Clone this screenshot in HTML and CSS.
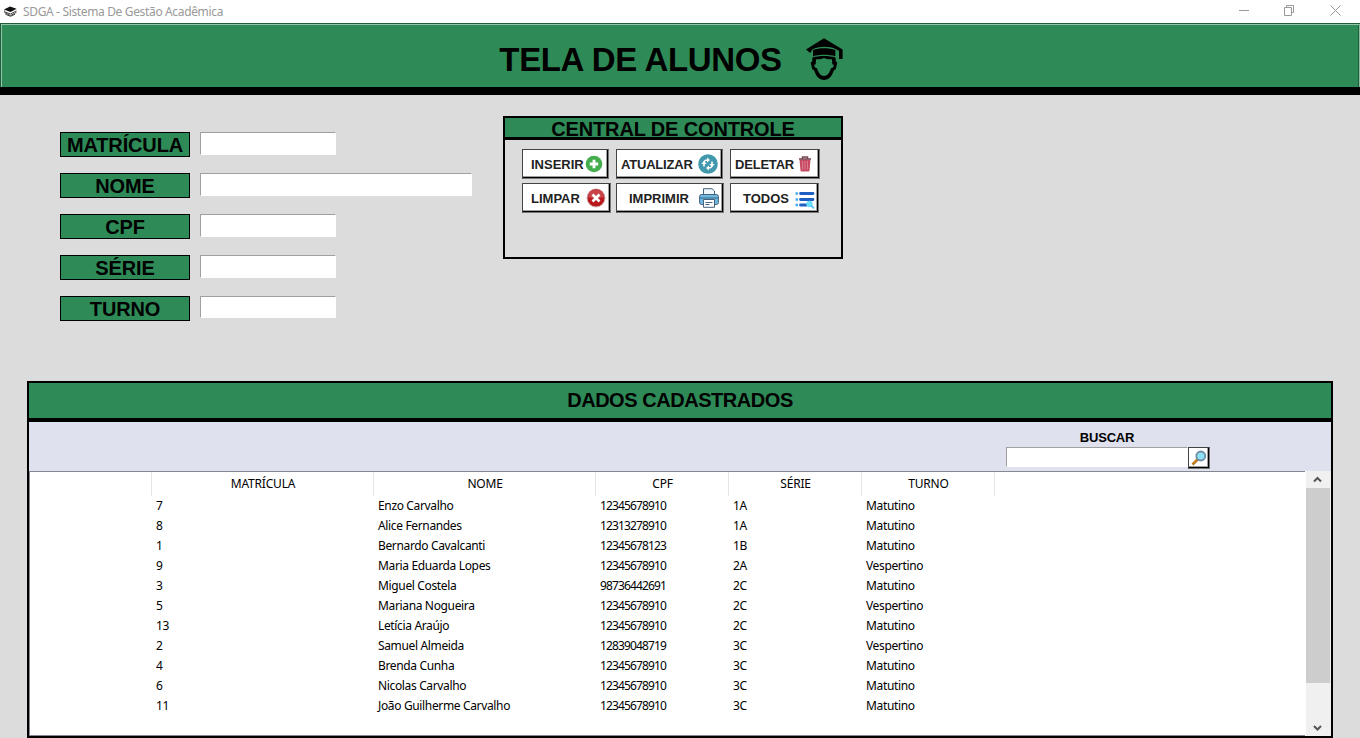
FILE: index.html
```
<!DOCTYPE html>
<html lang="pt-BR">
<head>
<meta charset="utf-8">
<title>SDGA - Sistema De Gestão Acadêmica</title>
<link rel="stylesheet" href="styles.css">
</head>
<body>
<div class="titlebar">
  <svg class="app-icon" width="13" height="11" viewBox="0 0 13 11"><path d="M0 3.400 6 .4l6.600 2.300-6 3.300z" fill="#111"/><path d="M.5 4.500v1.300l6 2.200 6-3.200M.5 6.600l6 3 6-3.400M1.500 8.300l5 2 4.500-2" fill="none" stroke="#444" stroke-width="1"/></svg>
  <span class="app-name">SDGA - Sistema De Gestão Acadêmica</span>
  <svg class="win-controls" width="102" height="11" viewBox="0 0 102 11" fill="none" stroke="#999"><path d="M0 5.500h10M45.500 2.500h7v8h-7zM47.500 2.500v-2h7v7h-2M91.500.5l10 10M101.500.5l-10 10"/></svg>
</div>
<header class="banner">
  <h1>TELA DE ALUNOS</h1>
  <svg width="38" height="43" viewBox="0 0 38 43"><path d="M18 1.200 0 12.500l4.200 3.500 2.300-3.500c6-3.500 17-3.500 23.500-.3l3 1.500V22h3.600v-9.400z"/><path d="M7 13c6-2.500 16-2.500 22.300 0v6.200c-6-2-16-2-22.300 0z"/><path fill-rule="evenodd" d="M6.500 20.500c6-2 17-2 23 0l.3 4 1.500 1-1.500 6.500-2 1.500c-2 6-5 9.500-9.800 9.500S10.200 39.500 8.200 33.500l-2-1.500-1.500-6.500 1.500-1zM10 22.300l-.3 5-1.700.7 1 2.500 2 .8c1.500 4.900 3.700 7.700 7 7.700s5.500-2.800 7-7.700l2-.8 1-2.500-1.700-.7-.3-5c-3 .2-6-.3-8-1.300-2 1-5 1.500-8 1.300z"/></svg>
</header>
<main>
  <section class="top">
    <form class="student-form">
      <label>MATRÍCULA</label><input type="text">
      <label>NOME</label><input class="wide" type="text">
      <label>CPF</label><input type="text">
      <label>SÉRIE</label><input type="text">
      <label>TURNO</label><input class="last" type="text">
    </form>
    <div class="control">
      <h2>CENTRAL DE CONTROLE</h2>
      <div class="row">
        <button class="btn inserir"><span>INSERIR</span><svg width="18" height="18" viewBox="0 0 18 18"><circle cx="9" cy="9" r="8.300" fill="#45ad4e"/><path d="M9 4.800v8.400M4.800 9h8.400" stroke="#fff" stroke-width="2.800"/></svg></button>
        <button class="btn atualizar"><span>ATUALIZAR</span><svg width="20" height="20" viewBox="0 0 20 20"><circle cx="10" cy="10" r="9.800" fill="#4298ac"/><g fill="none" stroke="#fff" stroke-width="1.600"><path d="M6 12.500V9C6 7 7 6 9.500 6M14 7.500V11c0 2-1 3-3.500 3"/></g><path d="m3.300 10 2.700-3L8.700 10zM11.300 10l2.700 3 2.700-3zM9 3.500l3 2.500-3 2.500zM11 11.500 8 14l3 2.500z" fill="#fff"/></svg></button>
        <button class="btn deletar"><span>DELETAR</span><svg width="14" height="16" viewBox="0 0 14 16"><path d="M1.500 3.500h11l-1 11.200q0 .8-1 .8h-7q-1 0-1-.8z" fill="#c64b62"/><path d="M4.500 5v8.500M7 5v8.500M9.500 5v8.500" stroke="#e08a9a" stroke-width=".8"/><path d="M1 3h12M4.500 2.500V1h5v1.500" stroke="#74484f" stroke-width="1.500" fill="none"/></svg></button>
      </div>
      <div class="row">
        <button class="btn limpar"><span>LIMPAR</span><svg width="20" height="20" viewBox="0 0 20 20"><circle cx="10" cy="10" r="9" fill="#b9191d" stroke="#cfb0b0"/><path d="M2 9a8 8 0 0 1 16 0q-8 3-16 0z" fill="#c94447"/><path d="m6.500 6.500 7 7m0-7-7 7" stroke="#fff" stroke-width="2.700"/></svg></button>
        <button class="btn imprimir"><span>IMPRIMIR</span><svg width="20" height="20" viewBox="0 0 20 20" stroke="#45617c"><path d="M4.500 7V.7h8.500l2.500 2.300V7" fill="#eef7fb"/><rect x=".6" y="6.500" width="18.800" height="10" rx="2" fill="#6fb8df"/><path d="M1 10h18" stroke="#3b6588"/><path d="M4.500 11.500h11v7.800h-11z" fill="#fff"/><path d="M6.500 14.500h7M6.500 16.500h4" fill="none"/></svg></button>
        <button class="btn todos"><span>TODOS</span><svg width="20" height="18" viewBox="0 0 20 18"><path d="M5.500 2.500h12.500M5.500 8.500h12.500M5.500 14h6" stroke="#1f5fc4" stroke-width="2.800" stroke-linecap="round"/><path d="M.5 2.500h2.500M.5 8.500h2.500M.5 14h2.500" stroke="#46aef0" stroke-width="2.600"/><circle cx="14.500" cy="13" r="3.200" fill="#6cdcfb"/><path d="m16 14.500 3 3" stroke="#58c8f2" stroke-width="1.800"/></svg></button>
      </div>
    </div>
  </section>
  <section class="records">
    <h2>DADOS CADASTRADOS</h2>
    <div class="toolbar">
      <div class="search">
        <span class="search-label">BUSCAR</span>
        <div class="search-row"><input type="text"><button class="btn find"><svg width="16" height="16" viewBox="0 0 16 16"><path d="m1.500 14.500 5-5" stroke="#aa6a18" stroke-width="2.600"/><path d="m2 13.500 4-4" stroke="#f0aa28"/><circle cx="9.800" cy="6" r="4.500" fill="#8be1f7" stroke="#6f8ca0" stroke-width="1.800"/></svg></button></div>
      </div>
    </div>
    <div class="grid-wrap">
      <div class="grid">
      <table>
        <colgroup><col class="c0"><col class="c1"><col class="c1"><col class="c2"><col class="c2"><col class="c2"></colgroup>
        <thead><tr><th></th><th>MATRÍCULA</th><th>NOME</th><th>CPF</th><th>SÉRIE</th><th>TURNO</th></tr></thead>
        <tbody>
          <tr><td></td><td>7</td><td>Enzo Carvalho</td><td>12345678910</td><td>1A</td><td>Matutino</td></tr>
          <tr><td></td><td>8</td><td>Alice Fernandes</td><td>12313278910</td><td>1A</td><td>Matutino</td></tr>
          <tr><td></td><td>1</td><td>Bernardo Cavalcanti</td><td>12345678123</td><td>1B</td><td>Matutino</td></tr>
          <tr><td></td><td>9</td><td>Maria Eduarda Lopes</td><td>12345678910</td><td>2A</td><td>Vespertino</td></tr>
          <tr><td></td><td>3</td><td>Miguel Costela</td><td>98736442691</td><td>2C</td><td>Matutino</td></tr>
          <tr><td></td><td>5</td><td>Mariana Nogueira</td><td>12345678910</td><td>2C</td><td>Vespertino</td></tr>
          <tr><td></td><td>13</td><td>Letícia Araújo</td><td>12345678910</td><td>2C</td><td>Matutino</td></tr>
          <tr><td></td><td>2</td><td>Samuel Almeida</td><td>12839048719</td><td>3C</td><td>Vespertino</td></tr>
          <tr><td></td><td>4</td><td>Brenda Cunha</td><td>12345678910</td><td>3C</td><td>Matutino</td></tr>
          <tr><td></td><td>6</td><td>Nicolas Carvalho</td><td>12345678910</td><td>3C</td><td>Matutino</td></tr>
          <tr><td></td><td>11</td><td>João Guilherme Carvalho</td><td>12345678910</td><td>3C</td><td>Matutino</td></tr>
        </tbody>
      </table>
      </div>
      <div class="scrollbar">
        <svg width="9" height="17" viewBox="0 0 9 17"><path d="m1 10.500 3.500-3.500L8 10.500" fill="none" stroke="#555" stroke-width="2"/></svg>
        <div class="thumb"></div>
        <svg width="9" height="17" viewBox="0 0 9 17"><path d="M1 7l3.500 3.500L8 7" fill="none" stroke="#555" stroke-width="2"/></svg>
      </div>
    </div>
  </section>
</main>
</body>
</html>
```
FILE: styles.css
```
* { box-sizing: border-box; }
body { margin: 0; width: 1360px; height: 738px; overflow: hidden; background: #dcdcdc; color: #000; font-family: "Liberation Sans", Arial, sans-serif; }
h1, h2 { margin: 0; font-weight: bold; }
svg { display: block; flex: none; }
input { border: solid #fff; border-width: 1px; border-top-color: #a0a0a0; border-left-color: #a0a0a0; background: #fff; padding: 0 2px; border-radius: 0; outline: none; }

.titlebar { display: flex; align-items: center; height: 23px; background: #fff; padding-left: 4px; }
.app-icon { margin-right: 6px; }
.app-name { font: 12px/23px "Noto Sans", sans-serif; letter-spacing: -.35px; color: #999; }
.win-controls { margin: 0 19px 2px auto; }

.banner { display: flex; justify-content: center; height: 72px; background: #2e8b57; border-bottom: 8px solid #000; box-shadow: inset 0 1px #1e5c3a, inset 1px 0 #1e5c3a, inset -1px 0 #8fbfa3, inset 0 2px #93c3a8, inset 2px 0 #93c3a8, inset -2px 0 #1e5c3a; padding: 14px 17px 0 0; gap: 24px; }
.banner h1 { font-size: 33px; line-height: 45px; letter-spacing: -.35px; white-space: nowrap; }

.top { display: flex; height: 286px; padding: 21px 0 0 60px; }
.student-form { display: grid; grid-template-columns: 130px 272px; column-gap: 10px; grid-auto-rows: 25px; row-gap: 16px; margin-top: 16px; width: 443px; }
.student-form label { background: #2e8b57; border: 1px solid #000; font-weight: bold; font-size: 20px; line-height: 24px; letter-spacing: -.15px; text-align: center; }
.student-form input { width: 136px; height: 23px; }
.student-form input.wide { width: 272px; }
.student-form input.last { height: 22px; }

.control { width: 340px; height: 143px; border: 2px solid #000; }
.control h2 { height: 22px; background: #2e8b57; border-bottom: 3px solid #000; font-size: 20px; line-height: 22px; letter-spacing: -.15px; text-align: center; }
.row { display: flex; margin: 9px 0 -5px 17px; height: 30px; }
.btn { display: flex; align-items: center; height: 30px; padding: 0; border: 1px solid #444; border-right-color: #777; border-bottom-color: #777; border-radius: 0; background: #fff; box-shadow: inset -1px -1px #000, inset -2px -2px #a0a0a0; font: bold 13px "Liberation Sans", Arial, sans-serif; color: #222; }
.inserir { width: 87px; padding-left: 8px; margin-right: 7px; }
.atualizar { width: 107px; padding-left: 4px; margin-right: 7px; }
.deletar { width: 90px; padding-left: 4px; }
.limpar { width: 89px; padding-left: 8px; margin-right: 5px; }
.imprimir { width: 108px; padding-left: 12px; margin-right: 6px; }
.todos { width: 89px; padding-left: 12px; }
.inserir svg { margin-left: 1px; }
.atualizar span, .deletar span { letter-spacing: -.2px; }
.atualizar svg { margin-left: 5px; }
.deletar svg { margin-left: 4px; }
.limpar svg { margin-left: 6px; }
.imprimir svg { margin-left: 10px; }
.todos svg { margin: 3px 0 0 6px; }

.records { margin-left: 27px; width: 1306px; height: 357px; border: 2px solid #000; }
.records h2 { height: 39px; background: #2e8b57; border-bottom: 4px solid #000; font-size: 20px; line-height: 34px; text-align: center; letter-spacing: -.45px; }
.toolbar { height: 49px; background: #dfe2ee; padding: 7px 0 0 977px; }
.search { width: 204px; }
.search-label { display: block; text-align: center; font-weight: bold; font-size: 13px; line-height: 18px; letter-spacing: -.2px; padding-right: 2px; }
.search-row { display: flex; }
.search-row input { width: 182px; height: 20px; }
.find { width: 22px; height: 22px; justify-content: center; }

.grid-wrap { display: flex; justify-content: space-between; height: 265px; background: #fff; }
.grid { width: 1276px; height: 265px; border: solid #828790; border-width: 1px 0 1px 1px; }
table { border-collapse: collapse; table-layout: fixed; width: 965px; font: 12px "Noto Sans", sans-serif; height: 244px; }
.c0 { width: 122px; }
.c1 { width: 222px; }
.c2 { width: 133px; }
th { height: 24px; padding: 0; font-weight: normal; line-height: 22px; letter-spacing: -.2px; box-shadow: inset -1px 0 #e5e5e5; }
td { height: 20px; padding: 0 0 0 4px; line-height: 20px; letter-spacing: -.35px; white-space: nowrap; }
td:nth-child(4) { letter-spacing: -.87px; }
.scrollbar { width: 25px; height: 265px; background: #f0f0f0; display: flex; flex-direction: column; }
.scrollbar svg { margin-left: 7px; }
.thumb { width: 24px; height: 195px; background: #cdcdcd; margin-bottom: 36px; }
```
